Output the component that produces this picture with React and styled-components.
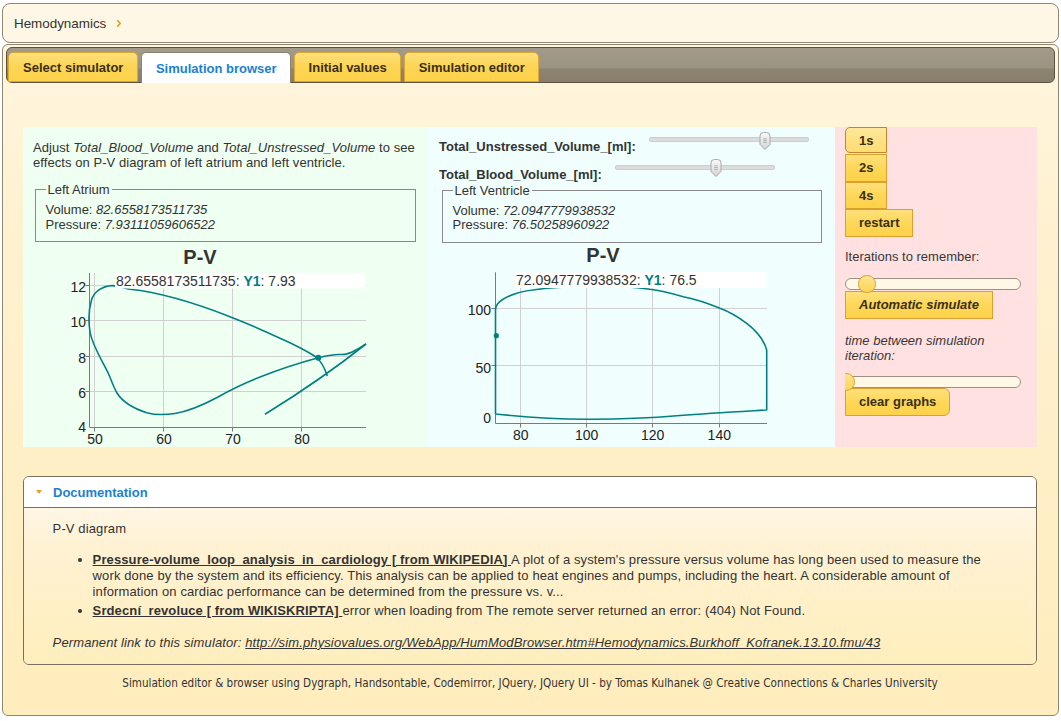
import React from 'react';
import styled, { createGlobalStyle } from 'styled-components';

const TEAL = '#008080';

const Global = createGlobalStyle`
  html, body { margin: 0; padding: 0; background: #ffffff; }
  body {
    font-family: "Liberation Sans", Arial, sans-serif;
    font-size: 13px;
    color: #333;
  }
`;

const Page = styled.div`
  width: 1061px;
  height: 721px;
  box-sizing: border-box;
  padding: 3px 2px 0;
  overflow: hidden;
  display: flex;
  flex-direction: column;
`;

const Breadcrumb = styled.div`
  box-sizing: border-box;
  height: 40px;
  border: 1px solid #928775;
  border-radius: 8px;
  background: #fff7e5;
  display: flex;
  align-items: center;
  padding-left: 11px;
  gap: 10px;
  font-size: 13.4px;
  color: #333;
`;

const Tabs = styled.div`
  box-sizing: border-box;
  margin-top: 1px;
  height: 672px;
  border: 1px solid #928775;
  border-radius: 6px;
  padding: 2px 3px 0;
  background: linear-gradient(to bottom, #fff6df 0%, #fff1cf 30%, #ffedbd 100%);
  display: flex;
  flex-direction: column;
`;

const TabBar = styled.div`
  box-sizing: border-box;
  height: 36px;
  border: 1px solid #5b5141;
  border-radius: 6px;
  padding-left: 1px;
  display: flex;
  align-items: flex-end;
  gap: 3px;
  background: linear-gradient(to bottom, #a29b8a 0%, #9b9482 58%, #8d8472 62%, #877e6c 100%);
`;

const Tab = styled.div`
  box-sizing: border-box;
  height: ${p => (p.$active ? 31 : 30)}px;
  margin-bottom: ${p => (p.$active ? -1 : 0)}px;
  padding: 0 ${p => p.$px || 13.5}px;
  display: flex;
  align-items: center;
  font-weight: bold;
  font-size: 13px;
  border-radius: 5px 5px 0 0;
  border: 1px solid ${p => (p.$active ? '#8c8272' : '#dea632')};
  border-bottom: ${p => (p.$active ? 'none' : '1px solid #dea632')};
  color: ${p => (p.$active ? '#1b7fd2' : '#3b2f16')};
  background: ${p => (p.$active ? '#ffffff' : 'linear-gradient(to bottom, #fee07a 0%, #fdd554 50%, #fdd24a 100%)')};
`;

const TabPanel = styled.div`
  padding: 44px 18px 0 17px;
  display: flex;
  flex-direction: column;
`;

const PanelRow = styled.div`
  display: flex;
  height: 320px;
`;

const Panel = styled.div`
  box-sizing: border-box;
  width: ${p => p.$w};
  flex: ${p => (p.$grow ? 1 : 'none')};
  background: ${p => p.$bg};
  padding: ${p => p.$pad};
  display: flex;
  flex-direction: column;
`;

const Intro = styled.p`
  margin: 0 0 12px;
  line-height: 15px;
  letter-spacing: 0.06px;
`;

const Fieldset = styled.fieldset`
  margin: ${p => p.$mt || 0}px 2px 0 ${p => p.$ml || 2}px;
  border: 1px solid #8a8a8a;
  padding: 6px 9.5px 9px;
  line-height: 14.5px;
  min-width: 0;
`;

const Legend = styled.legend`
  padding: 0 2px;
  line-height: 15px;
`;

const Value = styled.span`
  font-style: italic;
`;

const ChartTitle = styled.div`
  width: ${p => p.$w}px;
  margin-top: ${p => p.$mt}px;
  text-align: center;
  font-weight: bold;
  font-size: 20px;
  line-height: 20px;
  color: #333;
`;

const ChartSvg = styled.svg`
  display: block;
  font-family: "Liberation Sans", Arial, sans-serif;
`;

const SliderRow = styled.div`
  height: 27.7px;
  display: flex;
  align-items: flex-start;
`;

const SliderLabel = styled.span`
  font-weight: bold;
  line-height: 16px;
  margin-top: 7.8px;
  white-space: nowrap;
`;

const GraySlider = styled.div`
  position: relative;
  width: 160px;
  height: 18px;
  margin-left: 13.5px;
  flex: none;
`;

const GrayTrack = styled.div`
  position: absolute;
  left: 0;
  right: 0;
  top: 5.5px;
  height: 3px;
  border-radius: 2px;
  background: #dcdcdc;
  border: 1px solid #cdcdcd;
`;

const GrayHandle = styled.svg`
  position: absolute;
  top: 0;
  left: ${p => p.$left}px;
`;

const SimButton = styled.div`
  box-sizing: border-box;
  align-self: flex-start;
  height: ${p => (p.$first ? 26 : 27.5)}px;
  padding: 0 13px;
  display: flex;
  align-items: center;
  font-weight: bold;
  font-style: ${p => (p.$italic ? 'italic' : 'normal')};
  font-size: 13px;
  color: #3b2f16;
  border: 1px solid ${p => (p.$first ? '#c2852b' : '#dea02c')};
  border-radius: ${p => p.$radius || '0'};
  background: ${p => (p.$first
    ? 'linear-gradient(to bottom, #fee89a 0%, #fee185 50%, #fedd74 100%)'
    : 'linear-gradient(to bottom, #fee17c 0%, #fdd758 50%, #fdd24a 100%)')};
  margin-top: ${p => p.$mt || 0}px;
`;

const Note = styled.div`
  line-height: ${p => p.$lh || 16}px;
  margin-top: ${p => p.$mt}px;
  font-style: ${p => (p.$italic ? 'italic' : 'normal')};
  color: #383838;
`;

const UiSlider = styled.div`
  position: relative;
  box-sizing: border-box;
  width: 176px;
  height: 12.5px;
  margin-top: ${p => p.$mt}px;
  border: 1px solid #9b9182;
  border-radius: 6px;
  background: #fff8e7;
  clip-path: inset(-6px -6px -6px 0);
`;

const UiHandle = styled.div`
  position: absolute;
  box-sizing: border-box;
  top: -3.5px;
  left: ${p => p.$left}px;
  width: 17.5px;
  height: 17.5px;
  border-radius: 50%;
  border: 1px solid #d4a23b;
  background: linear-gradient(to bottom, #fee48c 0%, #fdd555 100%);
`;

const DocBox = styled.div`
  margin-top: 29px;
  border: 1px solid #7a6f5e;
  border-radius: 6px;
  overflow: hidden;
`;

const DocHeader = styled.div`
  height: 30px;
  background: #ffffff;
  border-bottom: 1px solid #7a6f5e;
  display: flex;
  align-items: center;
  padding-left: 12px;
  gap: 11px;
  font-weight: bold;
  color: #1b7fd2;
`;

const Caret = styled.span`
  width: 0;
  height: 0;
  border-left: 3.5px solid transparent;
  border-right: 3.5px solid transparent;
  border-top: 4px solid #e8a030;
`;

const DocContent = styled.div`
  padding: 13px 29px 13px 28.6px;
  background: linear-gradient(to bottom, #fff7e5 0%, #fff2d3 25%, #ffeebd 100%);
  line-height: 16px;
  letter-spacing: 0.12px;
`;

const DocPara = styled.p`
  margin: ${p => (p.$last ? '0' : '0 0 14.5px')};
  font-style: ${p => (p.$italic ? 'italic' : 'normal')};
`;

const DocList = styled.ul`
  margin: 0 0 15.5px;
  padding-left: 40px;
  line-height: 16.3px;
  & > li + li { margin-top: 2.5px; }
`;

const DocLink = styled.a`
  color: #333;
  font-weight: ${p => (p.$plain ? 'normal' : 'bold')};
  text-decoration: underline;
`;

const Footer = styled.div`
  padding-top: 10px;
  text-align: center;
  line-height: 16px;
  font-family: "DejaVu Sans Condensed", "DejaVu Sans", sans-serif;
  font-stretch: condensed;
  font-size: 11.6px;
  color: #333;
`;

function Chevron() {
  return (
    <svg width="6" height="9" viewBox="0 0 6 9">
      <path d="M1.2 1.2 L4.2 4.5 L1.2 7.8" fill="none" stroke="#e2a00e" strokeWidth="1.6" />
    </svg>
  );
}

function Handle({ left }) {
  return (
    <GrayHandle $left={left} width="12" height="19" viewBox="0 0 12 19">
      <defs>
        <linearGradient id={`hg${left}`} x1="0" y1="0" x2="0" y2="1">
          <stop offset="0" stopColor="#fafafa" />
          <stop offset="1" stopColor="#d3d3d3" />
        </linearGradient>
      </defs>
      <path d="M1 4 Q1 0.5 4.5 0.5 H7.5 Q11 0.5 11 4 V12.5 L6 17.5 L1 12.5 Z" fill={`url(#hg${left})`} stroke="#a8a8a8" strokeWidth="1" />
      <path d="M4.3 6.8 H7.7 M4.3 8.6 H7.7 M4.3 10.4 H7.7" stroke="#a0a0a0" strokeWidth="0.8" />
    </GrayHandle>
  );
}

function ChartLegend({ x, y, w, h, num, val }) {
  return (
    <g>
      <rect x={x} y={y} width={w} height={h} fill="#ffffff" />
      <text x={x + 1} y={y + 12.5} fontSize="14" fill="#333">
        {num}: <tspan fontWeight="bold" fill={TEAL}>Y1</tspan>: {val}
      </text>
    </g>
  );
}

function LeftChart() {
  const vx = [94.5, 163.5, 232.5, 301.5];
  const hy = [285.5, 320.5, 356.5, 391.5];
  const yl = [['12', 286.7], ['10', 321.7], ['8', 357.5], ['6', 393], ['4', 427]];
  const xl = [['50', 95], ['60', 164], ['70', 233], ['80', 302]];
  return (
    <ChartSvg width="385" height="180" viewBox="33 267 385 180">
      <g stroke="#d0d0d0" strokeWidth="1">
        {vx.map(x => <line key={x} x1={x} y1="273" x2={x} y2="427" />)}
        {hy.map(y => <line key={y} x1="89.5" y1={y} x2="366" y2={y} />)}
      </g>
      <path d="M89.5 273 V427.5 H366" fill="none" stroke="#7a7a7a" strokeWidth="1" />
      <g stroke="#7a7a7a" strokeWidth="1">
        {vx.map(x => <line key={x} x1={x} y1="427.5" x2={x} y2="431.5" />)}
        {hy.map(y => <line key={y} x1="85.5" y1={y} x2="89.5" y2={y} />)}
      </g>
      <g fontSize="14" fill="#222">
        {yl.map(([t, y]) => <text key={t} x="86" y={y + 5} textAnchor="end">{t}</text>)}
        {xl.map(([t, x]) => <text key={t} x={x} y="444" textAnchor="middle">{t}</text>)}
      </g>
      <g fill="none" stroke={TEAL} strokeWidth="1.6" strokeLinejoin="round">
        <path d="M327.3 376 C325 369, 322 362, 316 357 C305 350, 293 344, 280 338.3 C260 329, 245 322.5, 230 316.7 C200 305, 165 293, 130 289.3 C122 288, 118 285.5, 112 285.6 C102 286, 94 292, 91.5 300 C88.5 310, 88.5 322, 90 332 C92 345, 102 360, 108.3 373.3 C112 382, 114 388, 117 393 C122 401, 132 408, 146.7 412.7 C155 415, 165 415, 175 413.5 C190 411, 205 404, 218 397 C232 389, 245 383, 260 377 C275 371, 295 364, 318.3 357.7 C328 355.5, 334 354, 340 354.5 C346 355, 350 353.5, 356 350 C360 348, 363 346, 366 344" />
        <path d="M265 414.3 Q322 379 366 344" />
      </g>
      <circle cx="318.3" cy="357.7" r="3" fill={TEAL} />
      <ChartLegend x={115} y={273} w={250.5} h={15.5} num="82.6558173511735" val="7.93" />
    </ChartSvg>
  );
}

function MiddleChart() {
  const vx = [520.5, 586.5, 652.5, 719.5];
  const hy = [308.5, 365.5];
  const yl = [['100', 310], ['50', 368], ['0', 418.3]];
  const xl = [['80', 520.7], ['100', 586.7], ['120', 652.7], ['140', 719.3]];
  return (
    <ChartSvg width="385" height="182" viewBox="439 265 385 182">
      <g stroke="#d0d0d0" strokeWidth="1">
        {vx.map(x => <line key={x} x1={x} y1="272.3" x2={x} y2="423" />)}
        {hy.map(y => <line key={y} x1="495.5" y1={y} x2="767" y2={y} />)}
      </g>
      <path d="M495.5 272.3 V423.5 H767" fill="none" stroke="#7a7a7a" strokeWidth="1" />
      <g stroke="#7a7a7a" strokeWidth="1">
        {vx.map(x => <line key={x} x1={x} y1="423.5" x2={x} y2="427.5" />)}
        {hy.map(y => <line key={y} x1="491.5" y1={y} x2="495.5" y2={y} />)}
      </g>
      <g fontSize="14" fill="#222">
        {yl.map(([t, y]) => <text key={t} x="491" y={y + 5} textAnchor="end">{t}</text>)}
        {xl.map(([t, x]) => <text key={t} x={x} y="440" textAnchor="middle">{t}</text>)}
      </g>
      <path
        d="M495.5 414 C520 416.5, 555 419, 586.7 419.3 C620 419.5, 650 418, 680 415.5 C710 413, 740 411.5, 766.7 410 L766.7 350 C764 340, 758 332, 746.7 323.3 C738 317, 730 312, 720 308.3 C705 302, 690 298, 683.3 296.7 C670 293, 660 290.5, 650 289.3 C620 285, 580 285, 546.7 288.3 C530 290, 522 291.5, 516.7 293.3 C508 296, 501 300, 497.5 304 C496 306, 495.5 308, 495.5 310 L495.5 414"
        fill="none" stroke={TEAL} strokeWidth="1.6" strokeLinejoin="round"
      />
      <circle cx="496.3" cy="335.7" r="2.6" fill={TEAL} />
      <ChartLegend x={515} y={272} w={251.5} h={16} num="72.0947779938532" val="76.5" />
    </ChartSvg>
  );
}

export default function App() {
  return (
    <Page>
      <Global />
      <Breadcrumb>
        <span>Hemodynamics</span>
        <Chevron />
      </Breadcrumb>
      <Tabs>
        <TabBar>
          <Tab $px={14}>Select simulator</Tab>
          <Tab $active>Simulation browser</Tab>
          <Tab>Initial values</Tab>
          <Tab>Simulation editor</Tab>
        </TabBar>
        <TabPanel>
          <PanelRow>
            <Panel $w="405px" $bg="#effff1" $pad="13px 10px 0 10px">
              <Intro>
                Adjust <i>Total_Blood_Volume</i> and <i>Total_Unstressed_Volume</i> to see effects on P-V diagram of left atrium and left ventricle.
              </Intro>
              <Fieldset>
                <Legend>Left Atrium</Legend>
                <div>Volume: <Value>82.6558173511735</Value></div>
                <div>Pressure: <Value>7.93111059606522</Value></div>
              </Fieldset>
              <ChartTitle $w={334} $mt={5}>P-V</ChartTitle>
              <LeftChart />
            </Panel>
            <Panel $w="407px" $bg="#f0fffe" $pad="4.7px 11px 0 11px">
              <SliderRow>
                <SliderLabel>Total_Unstressed_Volume_[ml]:</SliderLabel>
                <GraySlider>
                  <GrayTrack />
                  <Handle left={110} />
                </GraySlider>
              </SliderRow>
              <SliderRow>
                <SliderLabel>Total_Blood_Volume_[ml]:</SliderLabel>
                <GraySlider>
                  <GrayTrack />
                  <Handle left={95} />
                </GraySlider>
              </SliderRow>
              <Fieldset $mt={-4.5} $ml={3}>
                <Legend>Left Ventricle</Legend>
                <div>Volume: <Value>72.0947779938532</Value></div>
                <div>Pressure: <Value>76.50258960922</Value></div>
              </Fieldset>
              <ChartTitle $w={328} $mt={2.4}>P-V</ChartTitle>
              <MiddleChart />
            </Panel>
            <Panel $grow $bg="#ffe1e1" $pad="0 10px">
              <SimButton $first $radius="5px 0 0 5px">1s</SimButton>
              <SimButton $mt={1}>2s</SimButton>
              <SimButton>4s</SimButton>
              <SimButton>restart</SimButton>
              <Note $mt={12}>Iterations to remember:</Note>
              <UiSlider $mt={13}>
                <UiHandle $left={12} />
              </UiSlider>
              <SimButton $italic $mt={1}>Automatic simulate</SimButton>
              <Note $italic $lh={15} $mt={14.5}>time between simulation iteration:</Note>
              <UiSlider $mt={12.5}>
                <UiHandle $left={-9} />
              </UiSlider>
              <SimButton $radius="0 6px 6px 0">clear graphs</SimButton>
            </Panel>
          </PanelRow>
          <DocBox>
            <DocHeader>
              <Caret />
              <span>Documentation</span>
            </DocHeader>
            <DocContent>
              <DocPara>P-V diagram</DocPara>
              <DocList>
                <li>
                  <DocLink>Pressure-volume_loop_analysis_in_cardiology [ from WIKIPEDIA] </DocLink>
                  A plot of a system's pressure versus volume has long been used to measure the work done by the system and its efficiency. This analysis can be applied to heat engines and pumps, including the heart. A considerable amount of information on cardiac performance can be determined from the pressure vs. v...
                </li>
                <li>
                  <DocLink>Srdecní_revoluce [ from WIKISKRIPTA] </DocLink>
                  error when loading from The remote server returned an error: (404) Not Found.
                </li>
              </DocList>
              <DocPara $italic $last>
                Permanent link to this simulator:{' '}
                <DocLink $plain>http://sim.physiovalues.org/WebApp/HumModBrowser.htm#Hemodynamics.Burkhoff_Kofranek.13.10.fmu/43</DocLink>
              </DocPara>
            </DocContent>
          </DocBox>
          <Footer>
            Simulation editor &amp; browser using Dygraph, Handsontable, Codemirror, JQuery, JQuery UI - by Tomas Kulhanek @ Creative Connections &amp; Charles University
          </Footer>
        </TabPanel>
      </Tabs>
    </Page>
  );
}
